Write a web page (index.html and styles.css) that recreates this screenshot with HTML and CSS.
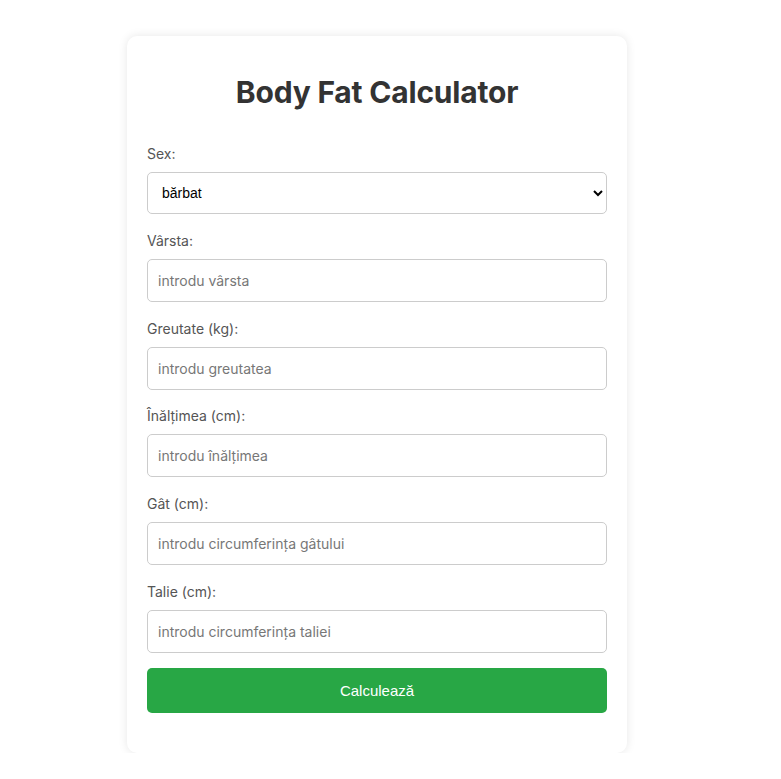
FILE: index.html
```html
<!DOCTYPE html>
<html lang="ro">
<head>
    <meta charset="UTF-8">
    <meta name="viewport" content="width=device-width, initial-scale=1.0">
    <title>Body Fat Calculator</title>
    <link rel="stylesheet" href="styles.css">
</head>
<body>

    <div class="container">
        <h1>Body Fat Calculator</h1>

        <div class="field">
            <label for="sex">Sex:</label>
            <select id="sex">
                <option value="m">bărbat</option>
                <option value="f">femeie</option>
            </select>
        </div>

        <div class="field">
            <label for="age">Vârsta:</label>
            <input type="number" id="age" placeholder="introdu vârsta">
        </div>

        <div class="field">
            <label for="weight">Greutate (kg):</label>
            <input type="number" id="weight" placeholder="introdu greutatea">
        </div>

        <div class="field">
            <label for="height">Înălțimea (cm):</label>
            <input type="number" id="height" placeholder="introdu înălțimea">
        </div>

        <div class="field">
            <label for="neck">Gât (cm):</label>
            <input type="number" id="neck" placeholder="introdu circumferința gâtului">
        </div>

        <div class="field">
            <label for="waist">Talie (cm):</label>
            <input type="number" id="waist" placeholder="introdu circumferința taliei">
        </div>

        <button>Calculează</button>
    </div>

</body>
</html>
```

FILE: styles.css
```css
body {
    font-family: Inter, "Noto Sans", sans-serif;
    margin: 0;
    padding-top: 36px;
    background-color: #fff;
    display: flex;
    justify-content: center;
}
.container {
    width: 460px;
    padding: 20px 20px 40px;
    border-radius: 10px;
    background-color: #fff;
    box-shadow: 0 0 10px rgba(0,0,0,0.1);
    margin-right: 27px;
}
h1 {
    text-align: center;
    font-size: 30px;
    line-height: 36px;
    font-weight: 700;
    color: #333;
    margin: 18px 0 32px;
    letter-spacing: -0.2px;
}
.field {
    margin-bottom: 14.75px;
}
label {
    display: block;
    font-size: 14px;
    line-height: 24px;
    color: #555;
    margin-bottom: 6px;
}
input, select {
    display: block;
    width: 100%;
    box-sizing: border-box;
    border: 1px solid #ccc;
    border-radius: 5px;
    background-color: #fff;
    font-size: 14px;
}
input {
    height: 43px;
    padding: 0 10px;
    font-family: Inter, "Noto Sans", sans-serif;
}
input::placeholder {
    color: #777;
}
select {
    height: 42px;
    padding: 0 10px;
    font-family: "Liberation Sans", Arial, sans-serif;
    color: #000;
}
button {
    display: block;
    width: 100%;
    height: 45px;
    border: none;
    border-radius: 5px;
    background-color: #28a745;
    color: #fff;
    font-family: "Liberation Sans", Arial, sans-serif;
    font-size: 15px;
    cursor: pointer;
}
button:hover {
    background-color: #218838;
}
```
